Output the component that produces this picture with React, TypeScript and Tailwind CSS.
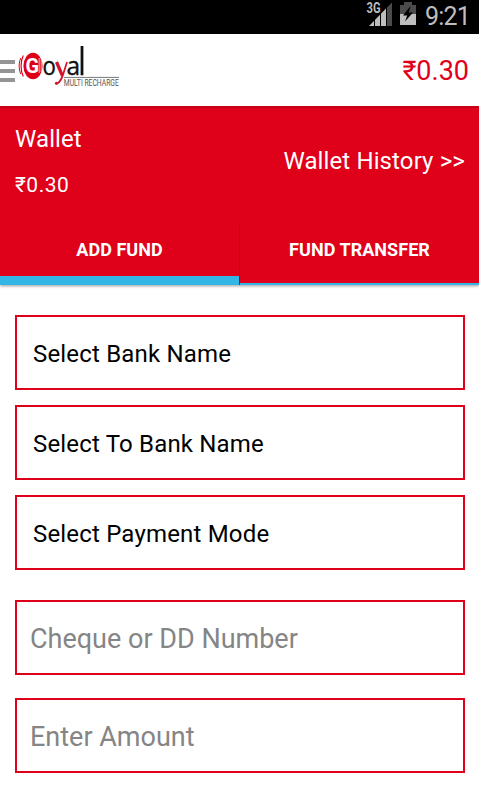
import { useState } from 'react';

const selects = ['Select Bank Name', 'Select To Bank Name', 'Select Payment Mode'];
const tabs = ['ADD FUND', 'FUND TRANSFER'];

function StatusBar() {
  return (
    <div className="flex h-[34px] items-start justify-end bg-black pr-[9px] text-[#bebebe]">
      <svg width="26" height="34" viewBox="0 0 26 34" className="mr-[8px]">
        <path d="M3 26 L20 8.5 V26 Z" fill="#bebebe" />
        <path d="M20 8.5 L26 2.5 V26 H20 Z" fill="#4b4b4b" />
        <path d="M8.5 16 V26 M14.5 11 V26 M20.5 6 V26" stroke="#000" strokeWidth="1" />
        <rect x="0" y="1" width="14" height="13" fill="#000" />
        <text
          x="0.5"
          y="13"
          fill="#bebebe"
          fontFamily="Roboto, sans-serif"
          fontSize="14"
          fontWeight="700"
          textLength="14"
          lengthAdjust="spacingAndGlyphs"
        >
          3G
        </text>
      </svg>
      <svg width="16" height="34" viewBox="0 0 16 34" className="mr-[9px]">
        <path d="M4 2 H12 V5 H16 V14 H0 V5 H4 Z" fill="#4b4b4b" />
        <path d="M0 14 H16 V25 H0 Z" fill="#bebebe" />
        <path d="M10.5 6 L3 15.5 H7.2 L5 21.5 L13 12.5 H8.8 Z" fill="#000" />
      </svg>
      <span className="text-[25px] leading-[33px] tracking-[-0.8px]">9:21</span>
    </div>
  );
}

function Logo() {
  return (
    <svg width="106" height="52" viewBox="18 44 106 52">
      <ellipse cx="33" cy="66" rx="9.6" ry="13.2" fill="#dd0018" />
      <g fill="none" stroke="#dd0018">
        <path d="M23.3 55.5 C20.3 61 20.3 71 23.3 76.5" strokeWidth="1.2" />
        <path d="M20.8 58 C18.6 63 18.6 69 20.8 74" strokeWidth="1" />
      </g>
      <g fontFamily="Roboto, sans-serif" fontSize="20" fontWeight="700" fill="#fff">
        <text x="25.5" y="73.2" textLength="13.5" lengthAdjust="spacingAndGlyphs">G</text>
      </g>
      <path d="M39.2 58 V73 M41.2 59.5 V72" stroke="#fff" strokeWidth="0.7" />
      <g fontFamily="'Open Sans', sans-serif" fontSize="25.5" fontWeight="500" fill="#111" stroke="#111" strokeWidth="0.4">
        <text transform="translate(42.4 75.3) scale(0.87 1)">o</text>
        <text transform="translate(66.6 75.3) scale(0.96 1)">a</text>
      </g>
      <path d="M56.5 62 L62.3 75.5" stroke="#d3122a" strokeWidth="3.2" />
      <path d="M67 62 C64 71 61.5 84.5 56 83.5" fill="none" stroke="#d3122a" strokeWidth="1.7" />
      <circle cx="56.4" cy="83.3" r="1.5" fill="#d3122a" />
      <path d="M82 46 V75.3" stroke="#111" strokeWidth="2.8" />
      <path d="M64 77.4 H119" stroke="#777" strokeWidth="1" />
      <text
        x="63.8"
        y="86"
        fill="#555"
        fontFamily="Roboto, sans-serif"
        fontSize="8.2"
        textLength="55"
        lengthAdjust="spacingAndGlyphs"
      >
        MULTI RECHARGE
      </text>
    </svg>
  );
}

export default function App() {
  const [activeTab, setActiveTab] = useState(0);

  return (
    <div className="flex h-[795px] w-[479px] flex-col overflow-hidden bg-white font-['Roboto',sans-serif]">
      <StatusBar />

      {/* App bar */}
      <header className="flex h-[72px] items-center justify-between pr-[10px]">
        <div className="flex items-center gap-[3px]">
          <div className="mt-[2px] flex w-[15px] flex-col gap-[5px]">
            <div className="h-[4px] bg-[#949494]" />
            <div className="h-[4px] bg-[#949494]" />
            <div className="h-[4px] bg-[#949494]" />
          </div>
          <Logo />
        </div>
        <span className="pt-[2px] text-[27px] leading-[32px] text-[#df0019]">₹0.30</span>
      </header>

      {/* Wallet summary */}
      <section className="relative z-10 flex h-[119px] justify-between border-t-2 border-[#c90017] bg-[#df0019] pr-[14px] pl-[15px] text-white">
        <div className="flex flex-col pt-[17px]">
          <span className="text-[24px] leading-[28px] tracking-[0.1px]">Wallet</span>
          <span className="mt-[19px] text-[21px] leading-[26px] tracking-[0.5px]">₹0.30</span>
        </div>
        <span className="pt-[39px] text-[24px] leading-[28px] tracking-[0.12px]">Wallet History &gt;&gt;</span>
      </section>

      {/* Tabs */}
      <nav className="grid h-[60px] grid-cols-[239px_1px_1fr] bg-[#df0019] shadow-[0_1px_3px_rgba(0,0,0,0.4)]">
        {tabs.map((tab, i) => (
          <button
            key={tab}
            onClick={() => setActiveTab(i)}
            className={`flex items-center justify-center text-[18px] font-bold tracking-[0.05px] text-white ${
              i === 0 ? 'col-start-1' : 'col-start-3'
            } row-start-1 ${
              activeTab === i ? 'border-b-[9px] border-[#33b5e5] pb-[3px]' : 'border-b-2 border-[#33b5e5] pb-[10px]'
            }`}
          >
            {tab}
          </button>
        ))}
        <div className="col-start-2 row-start-1 bg-[#c90017]" />
      </nav>

      {/* Form */}
      <form className="flex flex-col px-[15px] pt-[30px] pr-[14px]">
        <div className="flex flex-col gap-[15px]">
          {selects.map(label => (
            <button
              key={label}
              type="button"
              className="flex h-[75px] w-full items-center border-2 border-[#df0019] pt-[2px] pl-4 text-[24px] tracking-[0.18px] text-black"
            >
              {label}
            </button>
          ))}
        </div>
        <input
          placeholder="Cheque or DD Number"
          className="mt-[30px] h-[75px] border-2 border-[#df0019] pt-[2px] pl-[13px] text-[27px] placeholder:text-[#858585]"
        />
        <input
          placeholder="Enter Amount"
          className="mt-[23px] h-[75px] border-2 border-[#df0019] pt-[2px] pl-[13px] text-[27px] placeholder:text-[#858585]"
        />
      </form>
    </div>
  );
}
